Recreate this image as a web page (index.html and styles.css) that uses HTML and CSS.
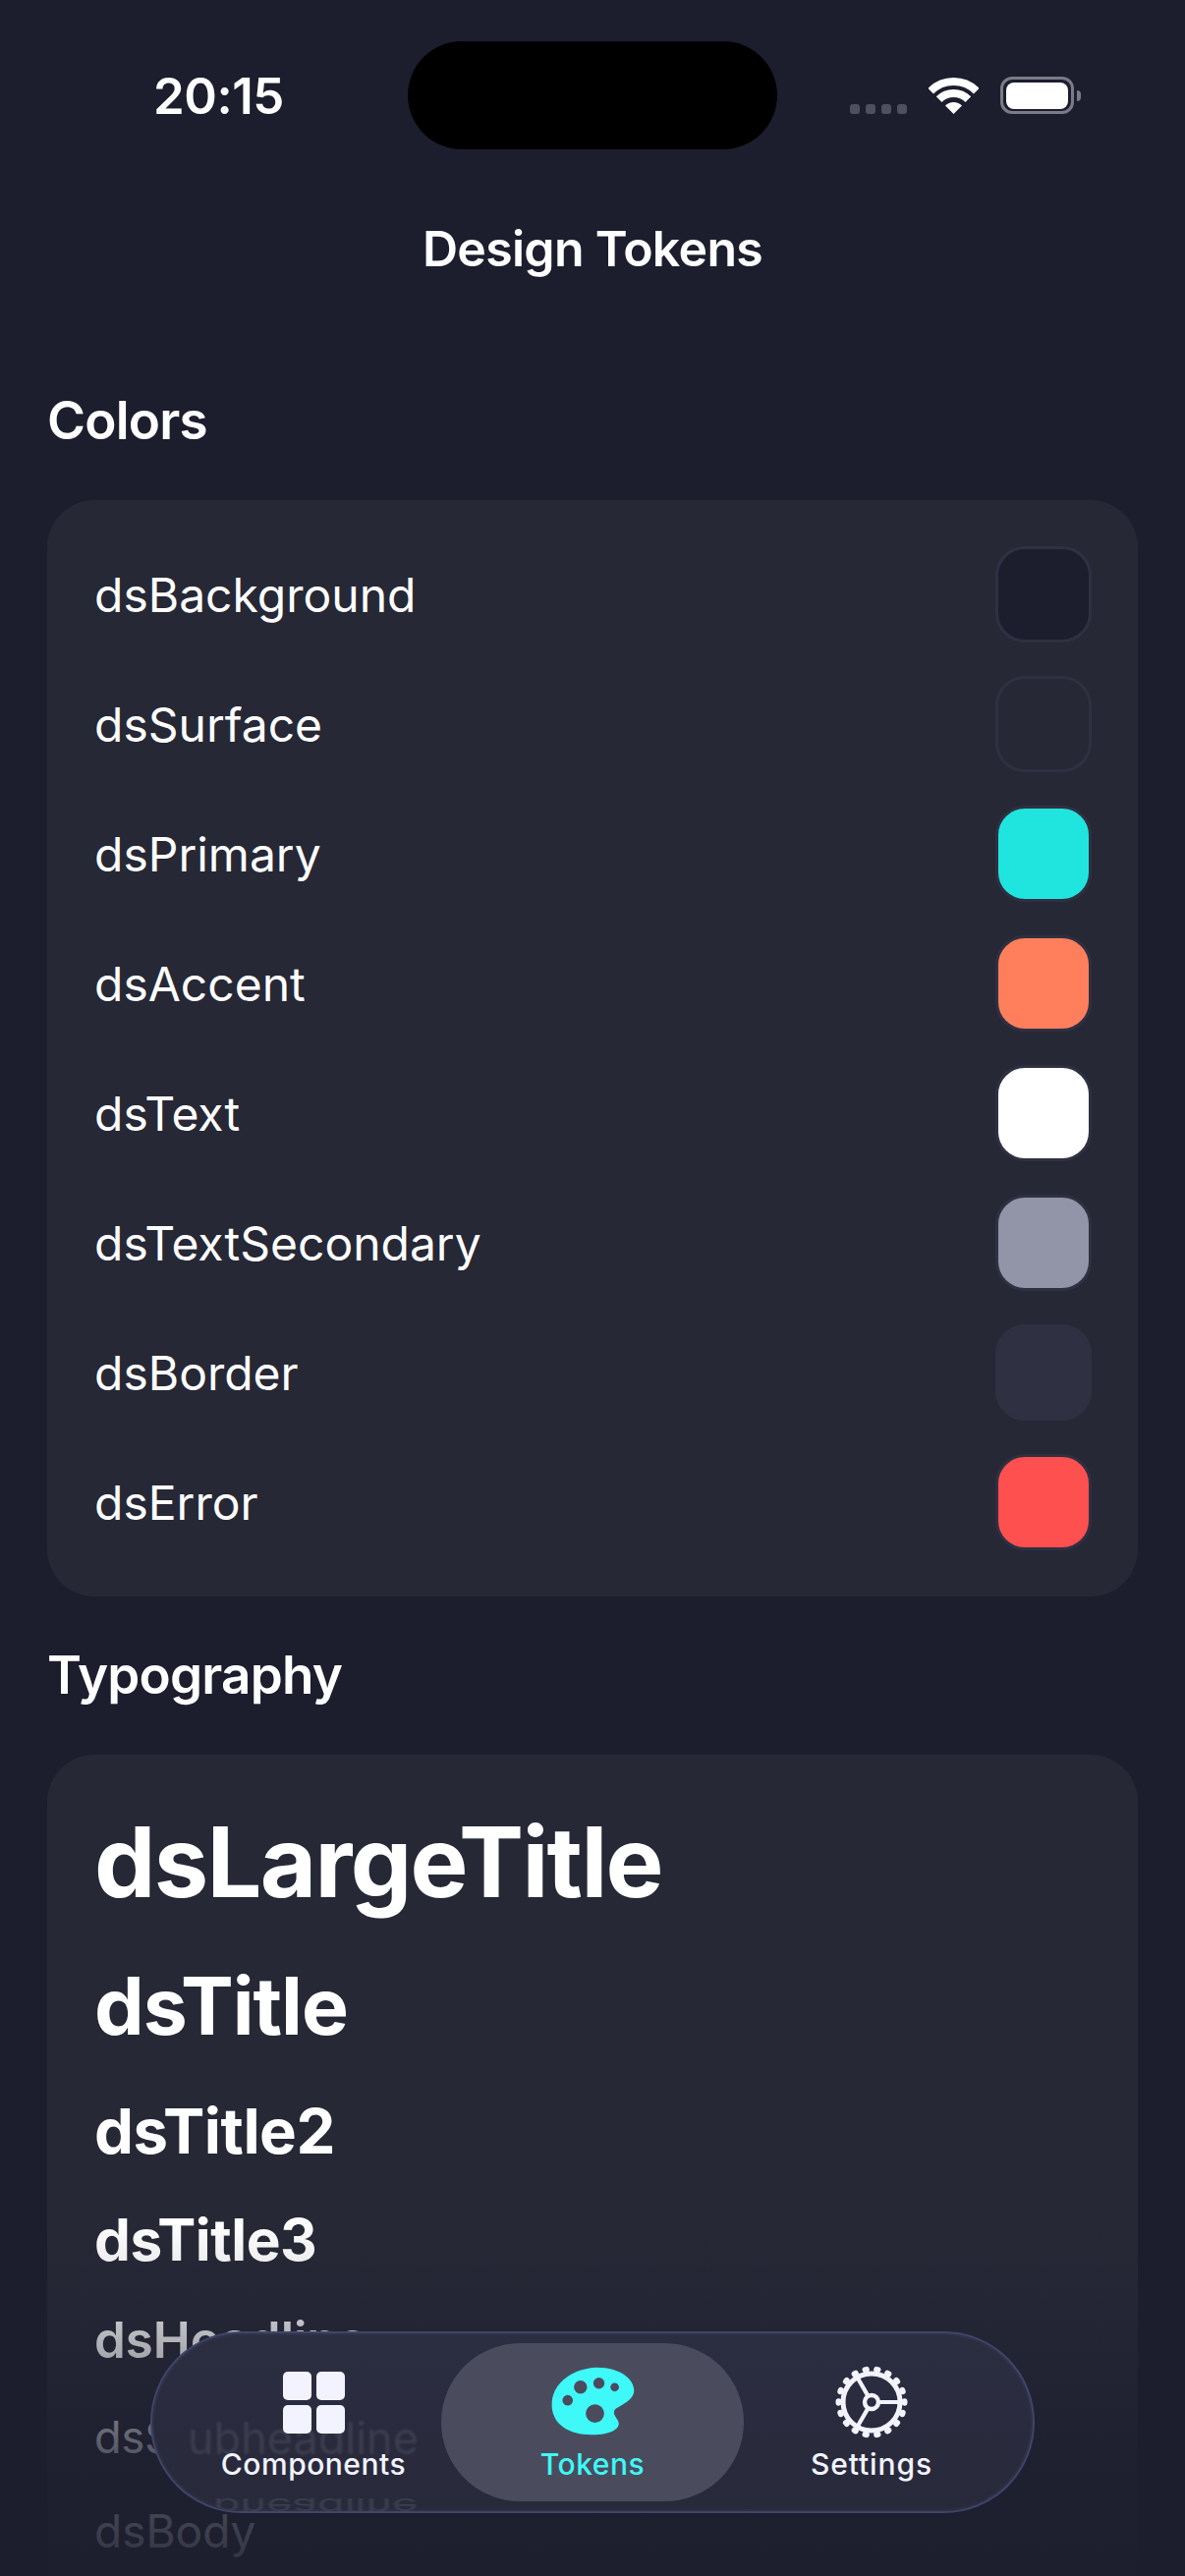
FILE: index.html
```html
<!DOCTYPE html>
<html lang="en">
<head>
    <meta charset="UTF-8">
    <meta name="viewport" content="width=device-width, initial-scale=1.0">
    <title>Design Tokens</title>
    <link rel="stylesheet" href="styles.css">
</head>
<body>
    <div class="screen">
        <div class="status-bar">
            <div class="time">20:15</div>
            <div class="island"></div>
            <div class="status-icons">
                <div class="signal"><span></span><span></span><span></span><span></span></div>
                <svg class="wifi" viewBox="0 0 51 37">
                    <path d="M2.2 13.7A33 33 0 0 1 48.8 13.7" fill="none" stroke="#fff" stroke-width="8"/>
                    <path d="M10.65 22.15A21 21 0 0 1 40.35 22.15" fill="none" stroke="#fff" stroke-width="8"/>
                    <path d="M25.5 37L17 28.5A12 12 0 0 1 34 28.5Z" fill="#fff"/>
                </svg>
                <div class="battery"><div class="battery-level"></div></div>
            </div>
        </div>

        <h1 class="page-title">Design Tokens</h1>

        <h2 class="section-title">Colors</h2>
        <div class="card color-list">
            <div class="color-row"><span>dsBackground</span><div class="swatch swatch-background"></div></div>
            <div class="color-row"><span>dsSurface</span><div class="swatch swatch-surface"></div></div>
            <div class="color-row"><span>dsPrimary</span><div class="swatch swatch-primary"></div></div>
            <div class="color-row"><span>dsAccent</span><div class="swatch swatch-accent"></div></div>
            <div class="color-row"><span>dsText</span><div class="swatch swatch-text"></div></div>
            <div class="color-row"><span>dsTextSecondary</span><div class="swatch swatch-secondary"></div></div>
            <div class="color-row"><span>dsBorder</span><div class="swatch swatch-border"></div></div>
            <div class="color-row"><span>dsError</span><div class="swatch swatch-error"></div></div>
        </div>

        <h2 class="section-title typography-title">Typography</h2>
        <div class="card type-list">
            <div class="type-large-title">dsLargeTitle</div>
            <div class="type-title">dsTitle</div>
            <div class="type-title2">dsTitle2</div>
            <div class="type-title3">dsTitle3</div>
            <div class="type-headline">dsHeadline</div>
            <div class="type-subheadline">dsSubheadline</div>
            <div class="type-body">dsBody</div>
        </div>

        <div class="bottom-fade"></div>

        <nav class="tab-bar">
            <div class="glass">
                <span class="ghost-text">ubheadline</span>
                <span class="ghost-text ghost-mirror">bheadline</span>
            </div>
            <div class="tab tab-components">
                <div class="grid-icon"><span></span><span></span><span></span><span></span></div>
                <span class="tab-label">Components</span>
            </div>
            <div class="tab tab-active">
                <svg class="palette-icon" viewBox="70 40 260 215">
                    <path fill="#3ff8f8" fill-rule="evenodd" d="M75 150C80 90 140 48 210 45C290 45 325 85 325 115C325 140 295 155 270 170C258 180 265 190 275 205C290 230 255 250 195 250C130 250 70 220 75 150ZM162 85A20 20 0 1 0 162 125A20 20 0 1 0 162 85ZM218 76A17 17 0 1 0 218 110A17 17 0 1 0 218 76ZM266 92A13 13 0 1 0 266 118A13 13 0 1 0 266 92ZM123 129A16 16 0 1 0 123 161A16 16 0 1 0 123 129ZM206 157A28 28 0 1 0 206 213A28 28 0 1 0 206 157Z"/>
                </svg>
                <span class="tab-label">Tokens</span>
            </div>
            <div class="tab tab-settings">
                <svg class="gear-icon" viewBox="-38 -38 76 76">
                    <circle r="33.5" fill="none" stroke="#f2f3ff" stroke-width="6" stroke-linecap="round" pathLength="18" stroke-dasharray=".12 .88" stroke-dashoffset=".06"/>
                    <circle r="29" fill="none" stroke="#f2f3ff" stroke-width="5"/>
                    <path d="M7 0H28M-3.5 6.1L-14 24.2M-3.5 -6.1L-14 -24.2" stroke="#f2f3ff" stroke-width="4.2"/>
                    <circle r="7" fill="none" stroke="#f2f3ff" stroke-width="4.4"/>
                </svg>
                <span class="tab-label">Settings</span>
            </div>
        </nav>
    </div>
</body>
</html>
```

FILE: styles.css
```css
* {
    box-sizing: border-box;
}
body {
    margin: 0;
    background-color: #1c1e2e;
    color: #fff;
    font-family: Inter, "Liberation Sans", sans-serif;
}
.screen {
    position: relative;
    width: 1206px;
    height: 2622px;
    padding: 42px 48px 0;
    overflow: hidden;
}

/* status bar */
.status-bar {
    display: grid;
    grid-template-columns: 367px 376px 1fr;
    align-items: center;
    height: 110px;
}
.time {
    padding-left: 108px;
    font-size: 51px;
    font-weight: 600;
    letter-spacing: -0.5px;
}
.island {
    height: 110px;
    background: #000;
    border-radius: 55px;
}
.status-icons {
    display: flex;
    justify-content: flex-end;
    align-items: center;
    gap: 22px;
    padding-right: 65px;
}
.signal {
    display: flex;
    gap: 6px;
    align-self: flex-end;
}
.signal span {
    width: 10px;
    height: 10px;
    border-radius: 3px;
    background: #4e505e;
}
.wifi {
    width: 51px;
    height: 37px;
}
.battery {
    position: relative;
    width: 75px;
    height: 38px;
    padding: 6px;
    border-radius: 12px;
    background: #1c1e2e;
    border: 3px solid #7b7b87;
}
.battery::after {
    content: "";
    position: absolute;
    right: -10px;
    top: 11px;
    width: 4px;
    height: 11px;
    border-radius: 0 6px 6px 0;
    background: #7b7b87;
}
.battery-level {
    width: 63px;
    height: 27px;
    margin: -3px;
    border-radius: 8px;
    background: #fff;
}

.page-title {
    margin: 66px 0 0;
    font-size: 50px;
    line-height: 70px;
    font-weight: 600;
    letter-spacing: -0.7px;
    text-align: center;
}
.section-title {
    margin: 105px 0 0;
    font-size: 53px;
    line-height: 70px;
    font-weight: 600;
    letter-spacing: -0.8px;
}
.typography-title {
    margin-top: 45px;
}
.card {
    margin-top: 46px;
    background: #262836;
    border-radius: 48px;
}

/* colors */
.color-list {
    display: flex;
    flex-direction: column;
    gap: 34px;
    padding: 47px;
}
.color-row {
    display: flex;
    justify-content: space-between;
    align-items: center;
    padding-left: 1px;
    font-size: 48px;
}
.swatch {
    width: 98px;
    height: 98px;
    border: 3px solid #2f3042;
    border-radius: 30px;
}
.swatch-background { background: #1c1e2e; }
.swatch-surface { background: #262836; }
.swatch-primary { background: #20e5df; }
.swatch-accent { background: #ff7f5c; }
.swatch-text { background: #fff; }
.swatch-secondary { background: #9294a8; }
.swatch-border { background: #2f3042; }
.swatch-error { background: #ff5050; }

/* typography */
.type-list {
    display: flex;
    flex-direction: column;
    gap: 34px;
    height: 900px;
    padding: 48px 48px;
}
.type-large-title {
    font-size: 99px;
    line-height: 123px;
    font-weight: 700;
    letter-spacing: -1.7px;
}
.type-title {
    font-size: 80.5px;
    line-height: 102px;
    font-weight: 700;
    letter-spacing: -1px;
}
.type-title2 {
    font-size: 63.5px;
    line-height: 84px;
    font-weight: 700;
    letter-spacing: -0.5px;
}
.type-title3 {
    font-size: 58.5px;
    line-height: 70px;
    font-weight: 700;
    letter-spacing: -0.5px;
}
.type-headline {
    font-size: 51px;
    line-height: 66px;
    font-weight: 600;
}
.type-subheadline {
    font-size: 45px;
    line-height: 64px;
}
.type-body {
    font-size: 46px;
    line-height: 58px;
}

/* fade under the tab bar */
.bottom-fade {
    position: absolute;
    left: 0;
    right: 0;
    top: 2260px;
    height: 362px;
    background: linear-gradient(to bottom,
        rgba(28, 30, 46, 0) 0,
        rgba(28, 30, 46, 0.07) 40px,
        rgba(28, 30, 46, 0.4) 142px,
        rgba(28, 30, 46, 0.75) 238px,
        rgba(28, 30, 46, 0.88) 332px,
        rgba(28, 30, 46, 0.92) 362px);
}

/* tab bar */
.tab-bar {
    position: absolute;
    left: 153px;
    top: 2373px;
    display: grid;
    grid-template-columns: 1fr 308px 1fr;
    width: 900px;
    height: 185px;
    padding: 10px 0;
    background: linear-gradient(to bottom, #2b2d41, #28293a);
    border: 2px solid #3f456c;
    border-radius: 93px;
    box-shadow: inset 0 0 0 2px rgba(255, 255, 255, 0.03);
}
.glass {
    position: absolute;
    inset: 0;
    overflow: hidden;
    border-radius: 91px;
}
.ghost-text {
    position: absolute;
    left: 36px;
    top: 77px;
    font-size: 45px;
    line-height: 60px;
    color: #3c3e4e;
    filter: blur(0.8px);
}
.ghost-mirror {
    top: 146px;
    left: 62px;
    transform: scaleY(-0.5);
}
.tab {
    position: relative;
    display: flex;
    flex-direction: column;
    align-items: center;
    justify-content: flex-end;
    padding-bottom: 18px;
    color: #f2f3ff;
}
.tab-components {
    padding-left: 34px;
}
.tab-settings {
    padding-right: 34px;
}
.tab-settings .tab-label {
    letter-spacing: 0.9px;
}
.tab-active {
    color: #3ff8f8;
    background: #4a4c5e;
    border-radius: 81px;
}
.tab-label {
    font-size: 30px;
    line-height: 40px;
    font-weight: 500;
    letter-spacing: 0.5px;
}
.grid-icon {
    display: grid;
    grid-template-columns: 29px 29px;
    gap: 5px;
    margin-bottom: 11px;
}
.grid-icon span {
    height: 29px;
    border-radius: 5px;
    background: #f2f3ff;
}
.palette-icon {
    width: 87px;
    height: 72px;
    margin-bottom: 8px;
}
.gear-icon {
    width: 76px;
    height: 76px;
    margin-bottom: 5px;
}
```
